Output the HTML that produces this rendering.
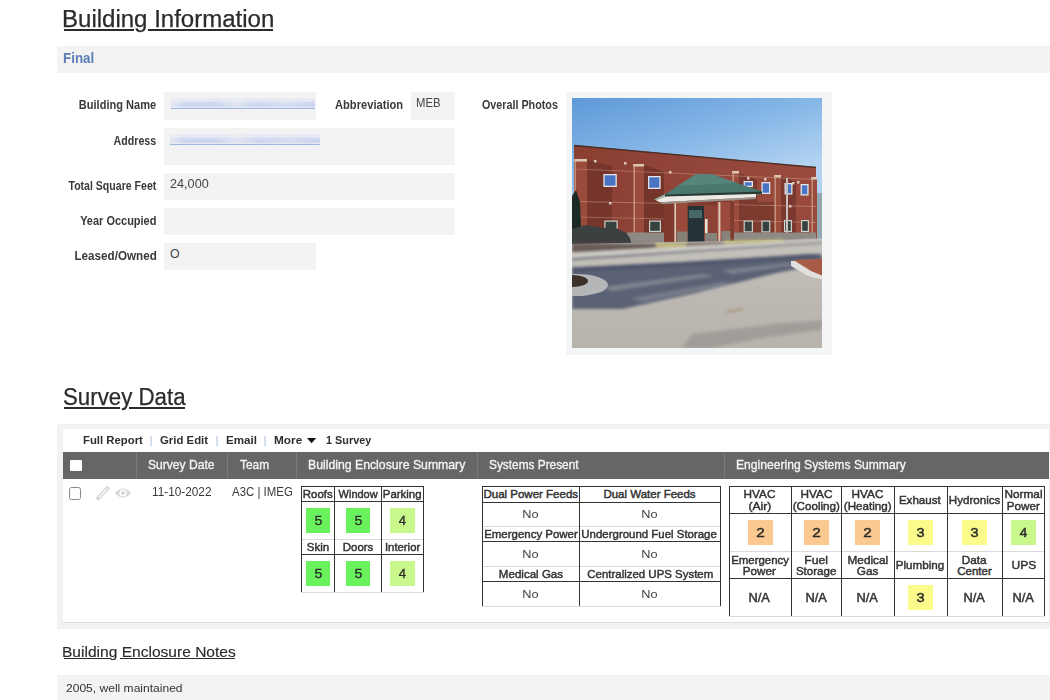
<!DOCTYPE html>
<html><head><meta charset="utf-8"><style>
html,body{margin:0;padding:0;background:#fff;width:1050px;height:700px;overflow:hidden;position:relative;font-family:"Liberation Sans",sans-serif;}
.t{position:absolute;white-space:nowrap;}
.r{position:absolute;}
</style></head><body>
<div class="t" style="left:61.58px;top:1.88px;font-size:23px;line-height:34.5px;color:#2b2b2b;transform:scaleX(1.0445);transform-origin:left;-webkit-text-stroke:0.25px currentColor;">Building Information</div>
<div class="r" style="left:63.5px;top:29.1px;width:70.5px;height:1.8px;background:#2b2b2b;"></div>
<div class="r" style="left:147.5px;top:29.1px;width:125.0px;height:1.8px;background:#2b2b2b;"></div>
<div class="r" style="left:57px;top:46px;width:993px;height:27px;background:#f3f3f3;"></div>
<div class="t" style="left:62.63px;top:47.70px;font-size:14.5px;line-height:21.75px;font-weight:bold;color:#5b7db8;transform:scaleX(0.9216);transform-origin:left;">Final</div>
<div class="t" style="left:70.23px;top:96.31px;font-size:12.3px;line-height:18.450000000000003px;font-weight:bold;color:#3a3a3a;transform:scaleX(0.8972);transform-origin:right;">Building Name</div>
<div class="t" style="left:107.22px;top:132.01px;font-size:12.3px;line-height:18.450000000000003px;font-weight:bold;color:#3a3a3a;transform:scaleX(0.8678);transform-origin:right;">Address</div>
<div class="t" style="left:53.83px;top:177.11px;font-size:12.3px;line-height:18.450000000000003px;font-weight:bold;color:#3a3a3a;transform:scaleX(0.8586);transform-origin:right;">Total Square Feet</div>
<div class="t" style="left:71.29px;top:212.11px;font-size:12.3px;line-height:18.450000000000003px;font-weight:bold;color:#3a3a3a;transform:scaleX(0.8929);transform-origin:right;">Year Occupied</div>
<div class="t" style="left:69.98px;top:246.71px;font-size:12.3px;line-height:18.450000000000003px;font-weight:bold;color:#3a3a3a;transform:scaleX(0.9486);transform-origin:right;">Leased/Owned</div>
<div class="r" style="left:164px;top:92px;width:152px;height:28px;background:#f3f3f3;"></div>
<div class="r" style="left:164px;top:128px;width:291px;height:37px;background:#f3f3f3;"></div>
<div class="r" style="left:164px;top:173px;width:291px;height:27px;background:#f3f3f3;"></div>
<div class="r" style="left:164px;top:208px;width:291px;height:27px;background:#f3f3f3;"></div>
<div class="r" style="left:164px;top:243px;width:152px;height:27px;background:#f3f3f3;"></div>
<div class="t" style="left:335.12px;top:95.81px;font-size:12.3px;line-height:18.450000000000003px;font-weight:bold;color:#3a3a3a;transform:scaleX(0.9068);transform-origin:left;">Abbreviation</div>
<div class="r" style="left:411px;top:92px;width:44px;height:28px;background:#f3f3f3;"></div>
<div class="t" style="left:416.10px;top:94.41px;font-size:12.3px;line-height:18.450000000000003px;color:#444;transform:scaleX(0.9189);transform-origin:left;">MEB</div>
<div class="t" style="left:170.37px;top:175.31px;font-size:12.3px;line-height:18.450000000000003px;color:#444;transform:scaleX(1.0303);transform-origin:left;">24,000</div>
<div class="t" style="left:169.95px;top:244.81px;font-size:12.3px;line-height:18.450000000000003px;color:#444;">O</div>
<div class="r" style="left:171px;top:98px;width:144px;height:10px;filter:blur(0.7px);opacity:.85;background:linear-gradient(180deg,rgba(0,0,0,0) 0px,#dfe4f4 1px,#e6e9f5 2.5px,#cfd7f1 4.5px,#c4cfef 7px,#d0d8f2 9px,rgba(0,0,0,0) 10px);"></div>
<div class="r" style="left:171px;top:98px;width:144px;height:10px;filter:blur(1.5px);background:linear-gradient(90deg,rgba(243,243,243,.7) 0%,rgba(243,243,243,0) 10%,rgba(243,243,243,.0) 30%,rgba(243,243,243,.5) 45%,rgba(243,243,243,0) 60%,rgba(243,243,243,.3) 80%,rgba(243,243,243,0) 95%);"></div>
<div class="r" style="left:171px;top:108px;width:144px;height:1.3px;background:#a2b4e4;"></div>
<div class="r" style="left:170px;top:134px;width:150px;height:10px;filter:blur(0.7px);opacity:.85;background:linear-gradient(180deg,rgba(0,0,0,0) 0px,#dfe4f4 1px,#e6e9f5 2.5px,#cfd7f1 4.5px,#c4cfef 7px,#d0d8f2 9px,rgba(0,0,0,0) 10px);"></div>
<div class="r" style="left:170px;top:134px;width:150px;height:10px;filter:blur(1.5px);background:linear-gradient(90deg,rgba(243,243,243,.7) 0%,rgba(243,243,243,0) 10%,rgba(243,243,243,.0) 30%,rgba(243,243,243,.5) 45%,rgba(243,243,243,0) 60%,rgba(243,243,243,.3) 80%,rgba(243,243,243,0) 95%);"></div>
<div class="r" style="left:170px;top:144px;width:150px;height:1.3px;background:#a2b4e4;"></div>
<div class="r" style="left:170px;top:158px;width:1px;height:1px;background:#cfcfcf;"></div>
<div class="t" style="left:481.57px;top:96.01px;font-size:12.3px;line-height:18.450000000000003px;font-weight:bold;color:#3a3a3a;transform:scaleX(0.8742);transform-origin:left;">Overall Photos</div>
<div class="r" style="left:566px;top:92px;width:266px;height:263px;background:#f4f5f7;"></div>
<svg class="r" style="left:572px;top:97.5px" width="250" height="250" viewBox="0 0 250 250"><defs><linearGradient id="sky" x1="0" y1="0" x2="0.3" y2="1"><stop offset="0" stop-color="#5e99d8"/><stop offset="0.28" stop-color="#86b7e7"/><stop offset="0.5" stop-color="#b2d2f1"/></linearGradient><linearGradient id="pave" x1="0" y1="0" x2="0" y2="1"><stop offset="0" stop-color="#c6c3bd"/><stop offset="0.5" stop-color="#bdb9b2"/><stop offset="1" stop-color="#b8b4ac"/></linearGradient><linearGradient id="brick" x1="0" y1="0" x2="1" y2="0"><stop offset="0" stop-color="#8a3f31"/><stop offset="0.5" stop-color="#92453a"/><stop offset="1" stop-color="#9a4a3c"/></linearGradient><filter id="bl" x="-10%" y="-10%" width="120%" height="120%"><feGaussianBlur stdDeviation="0.55"/></filter><filter id="bl2" x="-20%" y="-20%" width="140%" height="140%"><feGaussianBlur stdDeviation="1.6"/></filter></defs><rect width="250" height="250" fill="url(#sky)"/><g filter="url(#bl)"><rect x="244" y="95" width="6" height="51" fill="#7d8a84" opacity="0.6"/><polygon points="2,47 244,69 244,146 2,146" fill="url(#brick)"/><polyline points="2,47.5 244,69.5" stroke="#4a2f28" stroke-width="1.3" fill="none"/><polygon points="15,62 40,68 40,146 15,146" fill="#76362b"/><polygon points="72,67 92,74 92,146 72,146" fill="#76362b"/><polygon points="159,105 204,105 204,146 159,146" fill="#7a392d"/><polygon points="167,75 185,82 185,105 167,105" fill="#7a392d"/><polygon points="209,78 224,84 224,146 209,146" fill="#7a392d"/><rect x="158" y="104" width="52" height="40" fill="#7c3a2f"/><rect x="2" y="61" width="13" height="85" fill="#9a4b3a"/><rect x="2" y="61" width="13" height="2.5" fill="#dccab8"/><rect x="2.5" y="61" width="1.5" height="85" fill="#d0ae98" opacity="0.7"/><rect x="61" y="66" width="11" height="80" fill="#9a4b3a"/><rect x="61" y="66" width="11" height="2.5" fill="#dccab8"/><rect x="61.5" y="66" width="1.5" height="80" fill="#d0ae98" opacity="0.7"/><rect x="160" y="73" width="7" height="73" fill="#9a4b3a"/><rect x="160" y="73" width="7" height="2.5" fill="#dccab8"/><rect x="160.5" y="73" width="1.5" height="73" fill="#d0ae98" opacity="0.7"/><rect x="202" y="77" width="7" height="69" fill="#9a4b3a"/><rect x="202" y="77" width="7" height="2.5" fill="#dccab8"/><rect x="202.5" y="77" width="1.5" height="69" fill="#d0ae98" opacity="0.7"/><rect x="239" y="79" width="6" height="67" fill="#9a4b3a"/><rect x="239" y="79" width="6" height="2.5" fill="#dccab8"/><rect x="239.5" y="79" width="1.5" height="67" fill="#d0ae98" opacity="0.7"/><polygon points="2,70.4 244,81 244,81.9 2,71.3" fill="#d0a890" opacity="0.5"/><polygon points="2,103.0 244,108 244,108.9 2,103.89999999999999" fill="#d0a890" opacity="0.5"/><polygon points="2,118.4 244,124 244,124.9 2,119.3" fill="#d0a890" opacity="0.5"/><rect x="31.4" y="76" width="13.399999999999999" height="13" fill="#e4e4ea"/><rect x="32.699999999999996" y="77.3" width="10.799999999999999" height="10.4" fill="#4a74c4"/><rect x="76" y="78" width="12.599999999999994" height="13" fill="#e4e4ea"/><rect x="77.3" y="79.3" width="9.999999999999995" height="10.4" fill="#4a74c4"/><rect x="171.6" y="83" width="9.400000000000006" height="6" fill="#e4e4ea"/><rect x="172.9" y="84.3" width="6.800000000000006" height="3.4" fill="#4a74c4"/><rect x="189.4" y="84" width="8.900000000000006" height="12" fill="#e4e4ea"/><rect x="190.70000000000002" y="85.3" width="6.300000000000006" height="9.4" fill="#4a74c4"/><rect x="212.5" y="85" width="8.0" height="11.5" fill="#e4e4ea"/><rect x="213.8" y="86.3" width="5.4" height="8.9" fill="#4a74c4"/><rect x="228.6" y="86" width="8.0" height="11.5" fill="#e4e4ea"/><rect x="229.9" y="87.3" width="5.4" height="8.9" fill="#4a74c4"/><rect x="32.3" y="122.5" width="13.400000000000006" height="12.0" fill="#cfcfcc"/><rect x="33.5" y="123.7" width="11.000000000000005" height="9.6" fill="#34423f"/><rect x="77" y="122.5" width="12" height="11.5" fill="#cfcfcc"/><rect x="78.2" y="123.7" width="9.6" height="9.1" fill="#34423f"/><rect x="171.6" y="122.5" width="9.400000000000006" height="12.0" fill="#cfcfcc"/><rect x="172.79999999999998" y="123.7" width="7.000000000000005" height="9.6" fill="#34423f"/><rect x="189.4" y="122.5" width="8.900000000000006" height="12.0" fill="#cfcfcc"/><rect x="190.6" y="123.7" width="6.500000000000005" height="9.6" fill="#34423f"/><rect x="212" y="122" width="8" height="12" fill="#cfcfcc"/><rect x="213.2" y="123.2" width="5.6" height="9.6" fill="#34423f"/><rect x="229" y="122" width="8" height="12" fill="#cfcfcc"/><rect x="230.2" y="123.2" width="5.6" height="9.6" fill="#34423f"/><rect x="22" y="62" width="2.5" height="2.5" fill="#d8c8c0"/><rect x="52" y="64" width="2.5" height="2.5" fill="#d8c8c0"/><rect x="37" y="104" width="2.5" height="2.5" fill="#d8c8c0"/><rect x="97" y="73" width="2.5" height="2.5" fill="#d8c8c0"/><rect x="175" y="79" width="2.5" height="2.5" fill="#d8c8c0"/><rect x="192" y="80" width="2.5" height="2.5" fill="#d8c8c0"/><rect x="220" y="84" width="2.5" height="2.5" fill="#d8c8c0"/><rect x="225" y="83" width="2.5" height="2.5" fill="#d8c8c0"/><rect x="217" y="107" width="2.5" height="2.5" fill="#d8c8c0"/><rect x="214" y="80" width="2" height="62" fill="#c8c0bc"/><rect x="55" y="134.5" width="189" height="10.5" fill="#8e8b86"/><polygon points="0,146 0,98 4,92 8,104 9,128 12,146" fill="#1f2b25"/><polygon points="0,131 14,127 30,130 42,129 54,135 58,140 60,148 0,150" fill="#3a403f"/><rect x="92" y="103" width="70" height="43" fill="#7e3a2e"/><rect x="115.5" y="108" width="17" height="38" fill="#283234"/><rect x="117" y="112" width="13" height="8" fill="#4f7474" opacity="0.8"/><rect x="132" y="107" width="13" height="39" fill="#8e4334"/><rect x="133" y="121" width="2.6" height="25" fill="#e6e2d6"/><rect x="133" y="135" width="12" height="11" fill="#86827a"/><rect x="102.4" y="104" width="13.1" height="42" fill="#9a4b3a"/><rect x="102.4" y="104" width="1.6" height="42" fill="#dccab8"/><rect x="104.8" y="133.5" width="10.7" height="12.5" fill="#86827a"/><rect x="145" y="104" width="13.3" height="42" fill="#9a4b3a"/><rect x="146.4" y="104" width="2" height="42" fill="#dccab8"/><rect x="149.4" y="133" width="8.9" height="13" fill="#86827a"/><polygon points="82,101.5 93,96.3 124,76.3 140,76.3 190,93.5 189,96.5 93,98" fill="#4a786e"/><polygon points="124,76.3 140,76.3 165,85 105,88" fill="#5c8a80" opacity="0.7"/><polygon points="82,101.5 93,96.3 94,98.5 86,102.5" fill="#9fb8aa"/><polygon points="93,96.5 190,93.5 190,95.8 93,99" fill="#2a3a36"/><polygon points="84,102.5 94,98.5 184,96 184,99.2 88,104.2" fill="#eceae4"/><polygon points="88,104.2 184,99.2 184,101 91,106" fill="#9a968e"/></g><polygon points="0,146 250,141 250,250 0,250" fill="url(#pave)"/><g filter="url(#bl2)"><polygon points="0,145 60,145.5 120,145 250,141 250,142 120,148 0,155.5" fill="#5a4a44" opacity="0.85"/><polygon points="84,146 114,146 114,148.5 84,149.5" fill="#c8bf74"/><polygon points="152,143 211,141.5 211,144 152,146" fill="#bdb86c"/><polygon points="0,155 250,141 250,143.5 0,159" fill="#d4d2cc"/><polygon points="0,159.5 250,143.5 250,145.5 0,162.5" fill="#6a6e7a" opacity="0.75"/><polygon points="0,169.5 110,164 240,156 250,156.5 250,166 200,176 120,196 50,211 0,211" fill="#5c6274"/><polygon points="0,169.5 110,164 240,156 250,156.5 240,159.5 110,168 0,174" fill="#4a5068" opacity="0.85"/><polygon points="30,189 130,176 142,178 40,193" fill="#9a9ca6" opacity="0.55"/><polygon points="60,200 150,184 165,186 70,204" fill="#9a9ca6" opacity="0.45"/><polygon points="150,172 225,164 230,166 160,176" fill="#9a9ca6" opacity="0.5"/></g><ellipse cx="4" cy="187" rx="32" ry="11" fill="#b5b6b8" filter="url(#bl)"/><ellipse cx="0" cy="183" rx="16" ry="6" fill="#3c302c" filter="url(#bl)"/><g filter="url(#bl)"><polygon points="222,162 250,160.7 250,179 238,176 224,168" fill="#a85c46"/><polygon points="219,163 223,163 239,173 250,177.5 250,181.5 236,178 219,168" fill="#e2e0dc"/></g><g filter="url(#bl2)" opacity="0.55"><polygon points="120,236 200,226 250,222 250,232 190,240 140,250 110,250" fill="#8e8c8a"/><polygon points="153,213 170,210 172,212 155,215" fill="#9a7a5a"/></g></svg>
<div class="t" style="left:62.70px;top:379.78px;font-size:23px;line-height:34.5px;color:#2b2b2b;transform:scaleX(0.9684);transform-origin:left;-webkit-text-stroke:0.25px currentColor;">Survey Data</div>
<div class="r" style="left:63.7px;top:407.3px;width:56.0px;height:1.8px;background:#2b2b2b;"></div>
<div class="r" style="left:129px;top:407.3px;width:56.19999999999999px;height:1.8px;background:#2b2b2b;"></div>
<div class="r" style="left:57px;top:424px;width:993px;height:205px;background:#f2f2f2;"></div>
<div class="r" style="left:63px;top:429px;width:986px;height:194px;background:#ffffff;border-bottom:1px solid #dcdcdc;box-sizing:border-box;"></div>
<div class="t" style="left:82.56px;top:432.01px;font-size:11.3px;line-height:16.950000000000003px;font-weight:bold;color:#2f2f2f;transform:scaleX(1.0041);transform-origin:left;">Full Report</div>
<div class="t" style="left:149.53px;top:432.01px;font-size:11.3px;line-height:16.950000000000003px;color:#a8bcd8;">|</div>
<div class="t" style="left:160.04px;top:432.01px;font-size:11.3px;line-height:16.950000000000003px;font-weight:bold;color:#2f2f2f;transform:scaleX(1.0080);transform-origin:left;">Grid Edit</div>
<div class="t" style="left:215.53px;top:432.01px;font-size:11.3px;line-height:16.950000000000003px;color:#a8bcd8;">|</div>
<div class="t" style="left:225.55px;top:432.01px;font-size:11.3px;line-height:16.950000000000003px;font-weight:bold;color:#2f2f2f;transform:scaleX(1.0263);transform-origin:left;">Email</div>
<div class="t" style="left:263.53px;top:432.01px;font-size:11.3px;line-height:16.950000000000003px;color:#a8bcd8;">|</div>
<div class="t" style="left:273.53px;top:432.01px;font-size:11.3px;line-height:16.950000000000003px;font-weight:bold;color:#2f2f2f;transform:scaleX(1.0450);transform-origin:left;">More</div>
<svg class="r" style="left:307px;top:437.8px" width="10" height="7"><path d="M0 0 L9.2 0 L4.6 5.3 Z" fill="#111"/></svg>
<div class="t" style="left:325.65px;top:432.01px;font-size:11.3px;line-height:16.950000000000003px;font-weight:bold;color:#2f2f2f;transform:scaleX(0.9615);transform-origin:left;">1 Survey</div>
<div class="r" style="left:63px;top:452px;width:986px;height:27px;background:#666666;"></div>
<div class="r" style="left:136px;top:452px;width:1px;height:27px;background:#7a7a7a;"></div>
<div class="r" style="left:227px;top:452px;width:1px;height:27px;background:#7a7a7a;"></div>
<div class="r" style="left:295.5px;top:452px;width:1px;height:27px;background:#7a7a7a;"></div>
<div class="r" style="left:477px;top:452px;width:1px;height:27px;background:#7a7a7a;"></div>
<div class="r" style="left:724px;top:452px;width:1px;height:27px;background:#7a7a7a;"></div>
<div class="r" style="left:70px;top:459.5px;width:11.5px;height:11.5px;background:#ffffff;border-radius:1px;"></div>
<div class="t" style="left:148.46px;top:454.91px;font-size:13.3px;line-height:19.950000000000003px;color:#f4f4f4;transform:scaleX(0.9095);transform-origin:left;-webkit-text-stroke:0.35px currentColor;">Survey Date</div>
<div class="t" style="left:239.76px;top:454.91px;font-size:13.3px;line-height:19.950000000000003px;color:#f4f4f4;transform:scaleX(0.8921);transform-origin:left;-webkit-text-stroke:0.35px currentColor;">Team</div>
<div class="t" style="left:307.62px;top:454.91px;font-size:13.3px;line-height:19.950000000000003px;color:#f4f4f4;transform:scaleX(0.9216);transform-origin:left;-webkit-text-stroke:0.35px currentColor;">Building Enclosure Summary</div>
<div class="t" style="left:489.47px;top:454.91px;font-size:13.3px;line-height:19.950000000000003px;color:#f4f4f4;transform:scaleX(0.8916);transform-origin:left;-webkit-text-stroke:0.35px currentColor;">Systems Present</div>
<div class="t" style="left:736.23px;top:454.91px;font-size:13.3px;line-height:19.950000000000003px;color:#f4f4f4;transform:scaleX(0.9114);transform-origin:left;-webkit-text-stroke:0.35px currentColor;">Engineering Systems Summary</div>
<div class="r" style="left:68.5px;top:487px;width:12.8px;height:13px;background:transparent;border:1.3px solid #8a8a8a;border-radius:2.5px;box-sizing:border-box;"></div>
<svg class="r" style="left:95px;top:485px" width="16" height="16" viewBox="0 0 16 16"><path d="M3.2 13.2 L12.6 3.2" stroke="#d9d9d9" stroke-width="4" stroke-linecap="round"/><path d="M3.6 12.6 L11.6 4.2" stroke="#ffffff" stroke-width="1.2" stroke-linecap="round"/><path d="M2 14.6 L3.4 11.8 L4.8 13.2 Z" fill="#d9d9d9"/></svg><svg class="r" style="left:114px;top:487px" width="18" height="12" viewBox="0 0 18 12"><path d="M0.8 6 Q9 -3 17 6 Q9 15 0.8 6 Z" fill="#d8d8d8"/><circle cx="9" cy="6" r="3.6" fill="#ffffff"/><circle cx="9" cy="6" r="2" fill="#d8d8d8"/></svg>
<div class="t" style="left:152.11px;top:482.51px;font-size:12.3px;line-height:18.450000000000003px;color:#3a3a3a;transform:scaleX(0.9594);transform-origin:left;">11-10-2022</div>
<div class="t" style="left:232.00px;top:482.51px;font-size:12.3px;line-height:18.450000000000003px;color:#3a3a3a;transform:scaleX(0.9300);transform-origin:left;">A3C | IMEG</div>
<div class="r" style="left:300.5px;top:486px;width:123.80000000000001px;height:1px;background:#333;"></div>
<div class="r" style="left:300.5px;top:501px;width:123.80000000000001px;height:1px;background:#333;"></div>
<div class="r" style="left:300.5px;top:539px;width:123.80000000000001px;height:1px;background:#d9d9d9;"></div>
<div class="r" style="left:300.5px;top:554px;width:123.80000000000001px;height:1px;background:#333;"></div>
<div class="r" style="left:300.5px;top:591.5px;width:123.80000000000001px;height:1px;background:#d9d9d9;"></div>
<div class="r" style="left:300.5px;top:486px;width:1px;height:105.5px;background:#333;"></div>
<div class="r" style="left:334.2px;top:486px;width:1px;height:105.5px;background:#333;"></div>
<div class="r" style="left:381px;top:486px;width:1px;height:105.5px;background:#333;"></div>
<div class="r" style="left:423.3px;top:486px;width:1px;height:105.5px;background:#333;"></div>
<div class="t" style="left:302.85px;top:485.81px;font-size:11.3px;line-height:16.950000000000003px;color:#333;transform:scaleX(1.0156);transform-origin:center;-webkit-text-stroke:0.45px currentColor;">Roofs</div>
<div class="r" style="left:305.6px;top:508.2px;width:24.5px;height:24.5px;background:#6af25c;"></div>
<div class="t" style="left:314.52px;top:512.44px;font-size:12px;line-height:18.0px;color:#2a2a2a;transform:scaleX(1.1709);transform-origin:center;-webkit-text-stroke:0.3px currentColor;">5</div>
<div class="t" style="left:337.96px;top:485.81px;font-size:11.3px;line-height:16.950000000000003px;color:#333;transform:scaleX(0.9705);transform-origin:center;-webkit-text-stroke:0.45px currentColor;">Window</div>
<div class="r" style="left:345.9px;top:508.2px;width:24.5px;height:24.5px;background:#6af25c;"></div>
<div class="t" style="left:354.77px;top:512.44px;font-size:12px;line-height:18.0px;color:#2a2a2a;transform:scaleX(1.1709);transform-origin:center;-webkit-text-stroke:0.3px currentColor;">5</div>
<div class="t" style="left:383.38px;top:485.81px;font-size:11.3px;line-height:16.950000000000003px;color:#333;transform:scaleX(1.0120);transform-origin:center;-webkit-text-stroke:0.45px currentColor;">Parking</div>
<div class="r" style="left:390.4px;top:508.2px;width:24.5px;height:24.5px;background:#c8f88c;"></div>
<div class="t" style="left:399.35px;top:512.44px;font-size:12px;line-height:18.0px;color:#2a2a2a;transform:scaleX(1.0905);transform-origin:center;-webkit-text-stroke:0.3px currentColor;">4</div>
<div class="t" style="left:306.95px;top:538.61px;font-size:11.3px;line-height:16.950000000000003px;color:#333;transform:scaleX(1.0256);transform-origin:center;-webkit-text-stroke:0.45px currentColor;">Skin</div>
<div class="r" style="left:305.6px;top:561.2px;width:24.5px;height:24.5px;background:#6af25c;"></div>
<div class="t" style="left:314.52px;top:565.44px;font-size:12px;line-height:18.0px;color:#2a2a2a;transform:scaleX(1.1709);transform-origin:center;-webkit-text-stroke:0.3px currentColor;">5</div>
<div class="t" style="left:342.76px;top:538.61px;font-size:11.3px;line-height:16.950000000000003px;color:#333;transform:scaleX(1.0127);transform-origin:center;-webkit-text-stroke:0.45px currentColor;">Doors</div>
<div class="r" style="left:345.9px;top:561.2px;width:24.5px;height:24.5px;background:#6af25c;"></div>
<div class="t" style="left:354.77px;top:565.44px;font-size:12px;line-height:18.0px;color:#2a2a2a;transform:scaleX(1.1709);transform-origin:center;-webkit-text-stroke:0.3px currentColor;">5</div>
<div class="t" style="left:384.63px;top:538.61px;font-size:11.3px;line-height:16.950000000000003px;color:#333;transform:scaleX(1.0030);transform-origin:center;-webkit-text-stroke:0.45px currentColor;">Interior</div>
<div class="r" style="left:390.4px;top:561.2px;width:24.5px;height:24.5px;background:#c8f88c;"></div>
<div class="t" style="left:399.35px;top:565.44px;font-size:12px;line-height:18.0px;color:#2a2a2a;transform:scaleX(1.0905);transform-origin:center;-webkit-text-stroke:0.3px currentColor;">4</div>
<div class="r" style="left:482px;top:486px;width:238.5px;height:1px;background:#333;"></div>
<div class="r" style="left:482px;top:501.5px;width:238.5px;height:1px;background:#333;"></div>
<div class="r" style="left:482px;top:526px;width:238.5px;height:1px;background:#d9d9d9;"></div>
<div class="r" style="left:482px;top:541px;width:238.5px;height:1px;background:#333;"></div>
<div class="r" style="left:482px;top:565.5px;width:238.5px;height:1px;background:#d9d9d9;"></div>
<div class="r" style="left:482px;top:581.3px;width:238.5px;height:1px;background:#333;"></div>
<div class="r" style="left:482px;top:606px;width:238.5px;height:1px;background:#d9d9d9;"></div>
<div class="r" style="left:482px;top:486px;width:1px;height:120px;background:#333;"></div>
<div class="r" style="left:579px;top:486px;width:1px;height:120px;background:#333;"></div>
<div class="r" style="left:719.5px;top:486px;width:1px;height:120px;background:#333;"></div>
<div class="t" style="left:483.45px;top:486.19px;font-size:11.5px;line-height:17.25px;color:#333;-webkit-text-stroke:0.45px currentColor;">Dual Power Feeds</div>
<div class="t" style="left:523.42px;top:505.89px;font-size:11.5px;line-height:17.25px;color:#444;transform:scaleX(1.1068);transform-origin:center;">No</div>
<div class="t" style="left:603.38px;top:486.19px;font-size:11.5px;line-height:17.25px;color:#333;-webkit-text-stroke:0.45px currentColor;">Dual Water Feeds</div>
<div class="t" style="left:642.17px;top:505.89px;font-size:11.5px;line-height:17.25px;color:#444;transform:scaleX(1.1068);transform-origin:center;">No</div>
<div class="t" style="left:483.65px;top:526.19px;font-size:11.5px;line-height:17.25px;color:#333;transform:scaleX(0.9966);transform-origin:center;-webkit-text-stroke:0.45px currentColor;">Emergency Power</div>
<div class="t" style="left:523.42px;top:545.69px;font-size:11.5px;line-height:17.25px;color:#444;transform:scaleX(1.1068);transform-origin:center;">No</div>
<div class="t" style="left:581.47px;top:526.19px;font-size:11.5px;line-height:17.25px;color:#333;transform:scaleX(0.9948);transform-origin:center;-webkit-text-stroke:0.45px currentColor;">Underground Fuel Storage</div>
<div class="t" style="left:642.17px;top:545.69px;font-size:11.5px;line-height:17.25px;color:#444;transform:scaleX(1.1068);transform-origin:center;">No</div>
<div class="t" style="left:498.77px;top:565.99px;font-size:11.5px;line-height:17.25px;color:#333;transform:scaleX(1.0054);transform-origin:center;-webkit-text-stroke:0.45px currentColor;">Medical Gas</div>
<div class="t" style="left:523.42px;top:585.69px;font-size:11.5px;line-height:17.25px;color:#444;transform:scaleX(1.1068);transform-origin:center;">No</div>
<div class="t" style="left:586.56px;top:565.99px;font-size:11.5px;line-height:17.25px;color:#333;transform:scaleX(0.9953);transform-origin:center;-webkit-text-stroke:0.45px currentColor;">Centralized UPS System</div>
<div class="t" style="left:642.17px;top:585.69px;font-size:11.5px;line-height:17.25px;color:#444;transform:scaleX(1.1068);transform-origin:center;">No</div>
<div class="r" style="left:728.5px;top:486.3px;width:316.70000000000005px;height:1px;background:#333;"></div>
<div class="r" style="left:728.5px;top:512.8px;width:316.70000000000005px;height:1px;background:#333;"></div>
<div class="r" style="left:728.5px;top:550.8px;width:316.70000000000005px;height:1px;background:#d9d9d9;"></div>
<div class="r" style="left:728.5px;top:577.8px;width:316.70000000000005px;height:1px;background:#333;"></div>
<div class="r" style="left:728.5px;top:615.8px;width:316.70000000000005px;height:1px;background:#d9d9d9;"></div>
<div class="r" style="left:728.5px;top:486.3px;width:1px;height:129.49999999999994px;background:#333;"></div>
<div class="r" style="left:790.8px;top:486.3px;width:1px;height:129.49999999999994px;background:#333;"></div>
<div class="r" style="left:841.3px;top:486.3px;width:1px;height:129.49999999999994px;background:#333;"></div>
<div class="r" style="left:893.5px;top:486.3px;width:1px;height:129.49999999999994px;background:#333;"></div>
<div class="r" style="left:946.5px;top:486.3px;width:1px;height:129.49999999999994px;background:#333;"></div>
<div class="r" style="left:1002px;top:486.3px;width:1px;height:129.49999999999994px;background:#333;"></div>
<div class="r" style="left:1044.2px;top:486.3px;width:1px;height:129.49999999999994px;background:#333;"></div>
<div class="t" style="left:744.36px;top:486.19px;font-size:11.5px;line-height:17.25px;color:#333;transform:scaleX(1.0252);transform-origin:center;-webkit-text-stroke:0.45px currentColor;">HVAC</div>
<div class="t" style="left:749.31px;top:497.99px;font-size:11.5px;line-height:17.25px;color:#333;transform:scaleX(1.0485);transform-origin:center;-webkit-text-stroke:0.45px currentColor;">(Air)</div>
<div class="r" style="left:747.6px;top:520.0px;width:25px;height:25px;background:#fbc890;"></div>
<div class="t" style="left:756.68px;top:523.79px;font-size:12.5px;line-height:18.75px;color:#2a2a2a;transform:scaleX(1.2224);transform-origin:center;-webkit-text-stroke:0.45px currentColor;">2</div>
<div class="t" style="left:730.60px;top:551.59px;font-size:11.5px;line-height:17.25px;color:#333;transform:scaleX(0.9953);transform-origin:center;-webkit-text-stroke:0.45px currentColor;">Emergency</div>
<div class="t" style="left:743.47px;top:563.19px;font-size:11.5px;line-height:17.25px;color:#333;transform:scaleX(1.0138);transform-origin:center;-webkit-text-stroke:0.45px currentColor;">Power</div>
<div class="t" style="left:749.48px;top:588.62px;font-size:12.2px;line-height:18.299999999999997px;color:#333;transform:scaleX(1.0518);transform-origin:center;-webkit-text-stroke:0.45px currentColor;">N/A</div>
<div class="t" style="left:800.76px;top:486.19px;font-size:11.5px;line-height:17.25px;color:#333;transform:scaleX(1.0252);transform-origin:center;-webkit-text-stroke:0.45px currentColor;">HVAC</div>
<div class="t" style="left:793.23px;top:497.99px;font-size:11.5px;line-height:17.25px;color:#333;transform:scaleX(1.0105);transform-origin:center;-webkit-text-stroke:0.45px currentColor;">(Cooling)</div>
<div class="r" style="left:804.0px;top:520.0px;width:25px;height:25px;background:#fbc890;"></div>
<div class="t" style="left:813.08px;top:523.79px;font-size:12.5px;line-height:18.75px;color:#2a2a2a;transform:scaleX(1.2224);transform-origin:center;-webkit-text-stroke:0.45px currentColor;">2</div>
<div class="t" style="left:805.28px;top:551.59px;font-size:11.5px;line-height:17.25px;color:#333;transform:scaleX(1.0592);transform-origin:center;-webkit-text-stroke:0.45px currentColor;">Fuel</div>
<div class="t" style="left:796.40px;top:563.19px;font-size:11.5px;line-height:17.25px;color:#333;transform:scaleX(1.0051);transform-origin:center;-webkit-text-stroke:0.45px currentColor;">Storage</div>
<div class="t" style="left:805.88px;top:588.62px;font-size:12.2px;line-height:18.299999999999997px;color:#333;transform:scaleX(1.0518);transform-origin:center;-webkit-text-stroke:0.45px currentColor;">N/A</div>
<div class="t" style="left:852.11px;top:486.19px;font-size:11.5px;line-height:17.25px;color:#333;transform:scaleX(1.0252);transform-origin:center;-webkit-text-stroke:0.45px currentColor;">HVAC</div>
<div class="t" style="left:844.27px;top:497.99px;font-size:11.5px;line-height:17.25px;color:#333;transform:scaleX(1.0102);transform-origin:center;-webkit-text-stroke:0.45px currentColor;">(Heating)</div>
<div class="r" style="left:855.4px;top:520.0px;width:25px;height:25px;background:#fbc890;"></div>
<div class="t" style="left:864.43px;top:523.79px;font-size:12.5px;line-height:18.75px;color:#2a2a2a;transform:scaleX(1.2224);transform-origin:center;-webkit-text-stroke:0.45px currentColor;">2</div>
<div class="t" style="left:848.00px;top:551.59px;font-size:11.5px;line-height:17.25px;color:#333;transform:scaleX(1.0233);transform-origin:center;-webkit-text-stroke:0.45px currentColor;">Medical</div>
<div class="t" style="left:857.26px;top:563.19px;font-size:11.5px;line-height:17.25px;color:#333;transform:scaleX(1.0270);transform-origin:center;-webkit-text-stroke:0.45px currentColor;">Gas</div>
<div class="t" style="left:857.23px;top:588.62px;font-size:12.2px;line-height:18.299999999999997px;color:#333;transform:scaleX(1.0518);transform-origin:center;-webkit-text-stroke:0.45px currentColor;">N/A</div>
<div class="t" style="left:899.31px;top:491.99px;font-size:11.5px;line-height:17.25px;color:#333;transform:scaleX(1.0046);transform-origin:center;-webkit-text-stroke:0.45px currentColor;">Exhaust</div>
<div class="r" style="left:908.0px;top:520.0px;width:25px;height:25px;background:#fbfb8c;"></div>
<div class="t" style="left:917.07px;top:523.79px;font-size:12.5px;line-height:18.75px;color:#2a2a2a;transform:scaleX(1.1587);transform-origin:center;-webkit-text-stroke:0.45px currentColor;">3</div>
<div class="t" style="left:896.41px;top:557.19px;font-size:11.5px;line-height:17.25px;color:#333;transform:scaleX(1.0138);transform-origin:center;-webkit-text-stroke:0.45px currentColor;">Plumbing</div>
<div class="r" style="left:908.0px;top:585.0px;width:25px;height:25px;background:#fbfb8c;"></div>
<div class="t" style="left:917.07px;top:588.79px;font-size:12.5px;line-height:18.75px;color:#2a2a2a;transform:scaleX(1.1587);transform-origin:center;-webkit-text-stroke:0.45px currentColor;">3</div>
<div class="t" style="left:948.93px;top:491.99px;font-size:11.5px;line-height:17.25px;color:#333;transform:scaleX(1.0062);transform-origin:center;-webkit-text-stroke:0.45px currentColor;">Hydronics</div>
<div class="r" style="left:962.2px;top:520.0px;width:25px;height:25px;background:#fbfb8c;"></div>
<div class="t" style="left:971.32px;top:523.79px;font-size:12.5px;line-height:18.75px;color:#2a2a2a;transform:scaleX(1.1587);transform-origin:center;-webkit-text-stroke:0.45px currentColor;">3</div>
<div class="t" style="left:962.15px;top:551.59px;font-size:11.5px;line-height:17.25px;color:#333;transform:scaleX(1.0198);transform-origin:center;-webkit-text-stroke:0.45px currentColor;">Data</div>
<div class="t" style="left:957.27px;top:563.19px;font-size:11.5px;line-height:17.25px;color:#333;-webkit-text-stroke:0.45px currentColor;">Center</div>
<div class="t" style="left:964.08px;top:588.62px;font-size:12.2px;line-height:18.299999999999997px;color:#333;transform:scaleX(1.0518);transform-origin:center;-webkit-text-stroke:0.45px currentColor;">N/A</div>
<div class="t" style="left:1005.00px;top:486.19px;font-size:11.5px;line-height:17.25px;color:#333;transform:scaleX(1.0271);transform-origin:center;-webkit-text-stroke:0.45px currentColor;">Normal</div>
<div class="t" style="left:1006.92px;top:497.99px;font-size:11.5px;line-height:17.25px;color:#333;transform:scaleX(1.0138);transform-origin:center;-webkit-text-stroke:0.45px currentColor;">Power</div>
<div class="r" style="left:1011.1px;top:520.0px;width:25px;height:25px;background:#c8f88c;"></div>
<div class="t" style="left:1020.17px;top:523.79px;font-size:12.5px;line-height:18.75px;color:#2a2a2a;transform:scaleX(1.0905);transform-origin:center;-webkit-text-stroke:0.45px currentColor;">4</div>
<div class="t" style="left:1011.60px;top:557.19px;font-size:11.5px;line-height:17.25px;color:#333;transform:scaleX(1.0414);transform-origin:center;-webkit-text-stroke:0.45px currentColor;">UPS</div>
<div class="t" style="left:1012.93px;top:588.62px;font-size:12.2px;line-height:18.299999999999997px;color:#333;transform:scaleX(1.0518);transform-origin:center;-webkit-text-stroke:0.45px currentColor;">N/A</div>
<div class="t" style="left:62.36px;top:640.85px;font-size:15px;line-height:22.5px;color:#2b2b2b;transform:scaleX(1.0368);transform-origin:left;-webkit-text-stroke:0.15px currentColor;">Building Enclosure Notes</div>
<div class="r" style="left:63.6px;top:657.5px;width:46.1px;height:1.3px;background:#2b2b2b;"></div>
<div class="r" style="left:120.3px;top:657.5px;width:114.89999999999999px;height:1.3px;background:#2b2b2b;"></div>
<div class="r" style="left:57px;top:674.5px;width:993px;height:26px;background:#f3f3f3;"></div>
<div class="t" style="left:66.10px;top:680.46px;font-size:11.8px;line-height:17.700000000000003px;color:#333;transform:scaleX(1.0212);transform-origin:left;">2005, well maintained</div>
</body></html>
